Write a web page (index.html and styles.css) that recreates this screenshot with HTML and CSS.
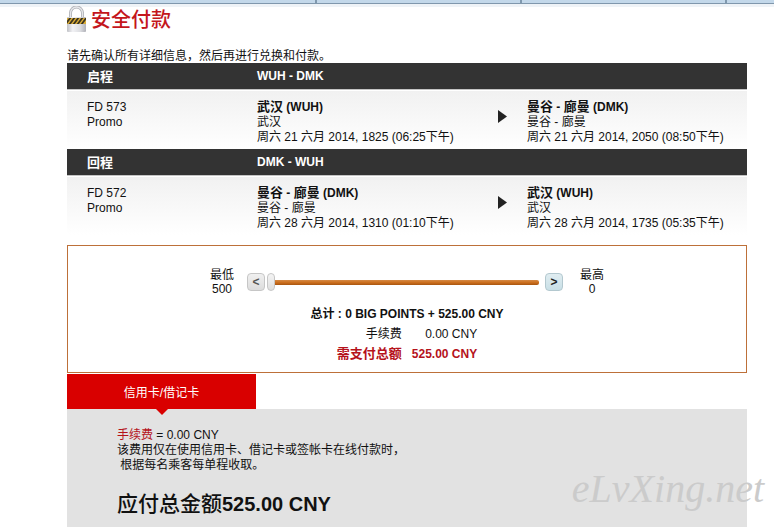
FILE: index.html
```html
<!DOCTYPE html>
<html lang="zh-CN">
<head>
  <meta charset="UTF-8" />
  <meta name="viewport" content="width=device-width, initial-scale=1.0" />
  <title>安全付款</title>
  <link rel="stylesheet" href="styles.css">
</head>
<body>
  <div class="topbar"></div>
  <main>
    <header class="title">
      <svg class="lock" viewBox="0 0 20 27" aria-hidden="true">
        <defs>
          <linearGradient id="metal" x1="0" x2="1" y1="0" y2="0">
            <stop offset="0" stop-color="#c0c1c6" />
            <stop offset="0.3" stop-color="#f2f2f5" />
            <stop offset="0.7" stop-color="#dcdde1" />
            <stop offset="1" stop-color="#b0b1b8" />
          </linearGradient>
          <clipPath id="band"><rect x="0" y="12" width="19" height="6" /></clipPath>
        </defs>
        <path d="M3.500 13V7a6 6 0 0 1 12 0V13" fill="none" stroke="#a9abb1" stroke-width="3" />
        <path d="M3.500 13V7a6 6 0 0 1 12 0V13" fill="none" stroke="#e6e7ea" stroke-width="1.500" />
        <rect x="0" y="11" width="19" height="15" rx="1" fill="url(#metal)" />
        <rect x="0" y="12" width="19" height="6" fill="#dcae38" />
        <path clip-path="url(#band)" d="M-2 19l6-8M2 19l6-8M6 19l6-8M10 19l6-8M14 19l6-8" stroke="#3c3520" stroke-width="1.800" />
      </svg>
      <h1>安全付款</h1>
    </header>

    <p class="intro">请先确认所有详细信息，然后再进行兑换和付款。</p>

    <table class="flight">
      <colgroup>
        <col class="col-number"><col class="col-from"><col class="col-arrow"><col>
      </colgroup>
      <thead>
        <tr>
          <th class="number zh">启程</th>
          <th colspan="3">WUH - DMK</th>
        </tr>
      </thead>
      <tbody>
        <tr>
          <td class="number">FD 573<br>Promo</td>
          <td><b><span class="zh">武汉</span> (WUH)</b><br>武汉<br>周六 21 六月 2014, 1825 (06:25下午)</td>
          <td class="arrow"><svg viewBox="0 0 9 13" aria-hidden="true"><path d="M0 0l9 6.500L0 13z" /></svg></td>
          <td><b><span class="zh">曼谷</span> - <span class="zh">廊曼</span> (DMK)</b><br>曼谷 - 廊曼<br>周六 21 六月 2014, 2050 (08:50下午)</td>
        </tr>
      </tbody>
    </table>

    <table class="flight">
      <colgroup>
        <col class="col-number"><col class="col-from"><col class="col-arrow"><col>
      </colgroup>
      <thead>
        <tr>
          <th class="number zh">回程</th>
          <th colspan="3">DMK - WUH</th>
        </tr>
      </thead>
      <tbody>
        <tr>
          <td class="number">FD 572<br>Promo</td>
          <td><b><span class="zh">曼谷</span> - <span class="zh">廊曼</span> (DMK)</b><br>曼谷 - 廊曼<br>周六 28 六月 2014, 1310 (01:10下午)</td>
          <td class="arrow"><svg viewBox="0 0 9 13" aria-hidden="true"><path d="M0 0l9 6.500L0 13z" /></svg></td>
          <td><b><span class="zh">武汉</span> (WUH)</b><br>武汉<br>周六 28 六月 2014, 1735 (05:35下午)</td>
        </tr>
      </tbody>
    </table>

    <section class="points">
      <div class="slider">
        <label class="min" for="points">最低<br>500</label>
        <button type="button" class="less">&lt;</button>
        <input type="range" id="points" min="0" max="500" value="0" />
        <button type="button" class="more">&gt;</button>
        <label class="max" for="points">最高<br>0</label>
      </div>
      <p class="sum">总计 : 0 BIG POINTS + 525.00 CNY</p>
      <table class="amounts">
        <tr>
          <th>手续费</th>
          <td>0.00 CNY</td>
        </tr>
        <tr class="due">
          <th class="zh">需支付总额</th>
          <td>525.00 CNY</td>
        </tr>
      </table>
    </section>

    <button type="button" class="tab">信用卡/借记卡</button>
    <section class="panel">
      <p><span class="fee">手续费</span> = 0.00 CNY<br>该费用仅在使用信用卡、借记卡或签帐卡在线付款时，<br>&nbsp;根据每名乘客每单程收取。</p>
      <h2><span class="label">应付总金额</span>525.00 CNY</h2>
      <div class="watermark">eLvXing.net</div>
    </section>
  </main>
</body>
</html>
```
FILE: styles.css
```css
body {
  margin: 0;
  background: #fff;
  color: #111;
  font-family: "Liberation Sans", "Noto Sans CJK SC", sans-serif;
  font-size: 12px;
  line-height: 15px;
}
h1, h2, p {
  margin: 0;
}
button {
  padding: 0;
  font-family: inherit;
  cursor: pointer;
}
.zh {
  font-size: 13px;
}
span.zh {
  line-height: 13px;
}
.topbar {
  height: 3px;
  border-bottom: 1px solid #8097ac;
  background: repeating-linear-gradient(to right, #c3d8ea 0, #c3d8ea 203px, #7f98ae 203px, #7f98ae 205px);
  background-position: 112px 0;
  box-shadow: 0 3px 0 #eff3f7;
}
main {
  max-width: 680px;
  margin: 0 27px 0 67px;
}
.title {
  display: flex;
  align-items: center;
  gap: 4px;
  height: 31px;
  padding-bottom: 14px;
}
.lock {
  width: 20px;
  height: 27px;
}
h1 {
  color: #c4161c;
  font-size: 20px;
  font-weight: 500;
  line-height: 28px;
}
.intro {
  line-height: 14px;
}

/* flights */
.flight {
  width: 100%;
  border-collapse: collapse;
  table-layout: fixed;
}
.col-number {
  width: 190px;
}
.col-from {
  width: 230px;
}
.col-arrow {
  width: 40px;
}
.flight thead {
  background: #333;
  color: #fff;
  text-align: left;
}
.flight th {
  height: 26px;
  padding: 0;
}
.flight tbody {
  background: linear-gradient(#c4c4c4 1px, #fff 1px, #fff 2px, #f1f1f1 2px, #fff);
}
.flight td {
  padding: 11px 0 4px;
  vertical-align: top;
  white-space: nowrap;
}
.flight .number {
  padding-left: 20px;
}
.flight .arrow {
  padding-top: 21px;
}
.arrow svg {
  display: block;
  width: 9px;
  height: 13px;
  margin-left: 11px;
  fill: #222;
}

/* points slider */
.points {
  margin-top: 10px;
  padding: 22px 0 8px;
  border: 1px solid #bd7039;
}
.slider {
  display: flex;
  justify-content: center;
  align-items: center;
  margin-bottom: 8px;
  line-height: 14px;
  text-align: center;
}
.slider .min {
  margin-right: 13px;
}
.slider .max {
  margin-left: 17px;
}
.slider button {
  width: 18px;
  height: 18px;
  border: 1px solid #c6c6c6;
  border-radius: 4px;
  background: linear-gradient(#f0f0f0, #dcdcdc);
  color: #555;
  font-size: 12px;
  font-weight: bold;
  line-height: 14px;
}
.slider .more {
  border-color: #b3c8cf;
  background: linear-gradient(#e0edf1, #c8dfe6);
  color: #222;
}
.slider input {
  appearance: none;
  width: 272px;
  height: 18px;
  margin: 0 6px 0 2px;
  background: transparent;
}
.slider input::-webkit-slider-runnable-track {
  height: 5px;
  border-radius: 2px;
  background: linear-gradient(#d58a45, #cc6f1e 50%, #a85510);
}
.slider input::-webkit-slider-thumb {
  appearance: none;
  box-sizing: border-box;
  width: 8px;
  height: 18px;
  margin-top: -7px;
  border: 1px solid #c6c6c6;
  border-radius: 4px;
  background: linear-gradient(#f4f4f4, #dedede);
}
.sum {
  font-weight: bold;
  line-height: 20px;
  text-align: center;
}
.amounts {
  margin: 0 auto;
  border-collapse: collapse;
  line-height: 20px;
  text-align: right;
}
.amounts th {
  padding: 0 10px 0 0;
  font-weight: normal;
  text-align: right;
}
.amounts td {
  padding: 0;
}
.amounts .due th,
.amounts .due td {
  color: #b5121b;
  font-weight: bold;
}

/* payment method */
.tab {
  position: relative;
  z-index: 1;
  display: block;
  width: 189px;
  height: 35px;
  margin-top: 1px;
  border: 0;
  background: #d90000;
  color: #fff;
  font-size: 12px;
}
.tab::after {
  content: "";
  position: absolute;
  top: 100%;
  left: 50%;
  margin-left: -6px;
  border: 6px solid transparent;
  border-top-color: #d90000;
  border-bottom: 0;
}
.panel {
  position: relative;
  padding: 19px 50px 11px;
  background: #e2e2e2;
}
.fee {
  color: #b5121b;
}
h2 {
  margin-top: 19px;
  font-size: 20px;
  line-height: 24px;
}
h2 .label {
  font-size: 21px;
  font-weight: 500;
  line-height: 22px;
}
.watermark {
  position: absolute;
  right: -17px;
  bottom: 18px;
  color: #cbcbcb;
  font-family: "Liberation Serif", serif;
  font-size: 40px;
  font-style: italic;
  line-height: 40px;
}
```
